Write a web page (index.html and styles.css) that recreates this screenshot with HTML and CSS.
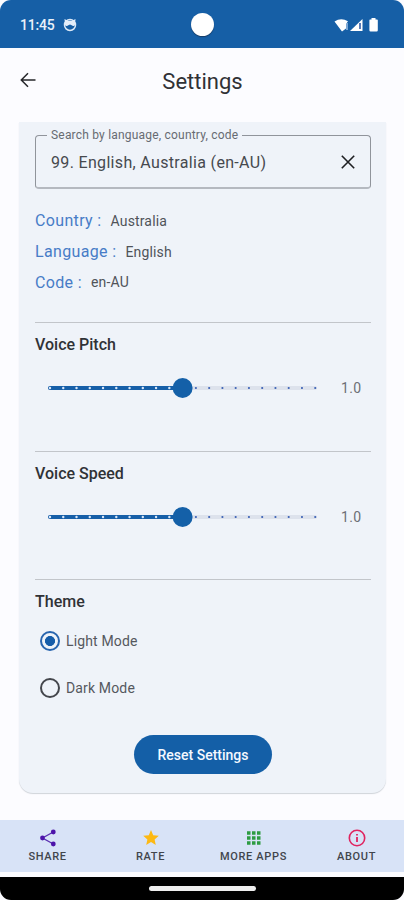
FILE: index.html
```html
<!DOCTYPE html>
<html lang="en">
<head>
<meta charset="utf-8">
<title>Settings</title>
<link rel="stylesheet" href="styles.css">
</head>
<body>
<div class="screen">
  <header class="status">
    <span class="time">11:45</span>
    <svg class="face" width="14" height="14" viewBox="0 0 14 14"><circle cx="7" cy="7" r="5.500" fill="none" stroke="#dce9f7" stroke-width="1.500"/><path d="M1.500 1l3.200 1.800h4.600L12.500 1l-.6 6.300q-1.200 1.300-2.700.2L7 6.600l-2.200.9q-1.500 1.100-2.700-.2z" fill="#e4eefa"/></svg>
    <span class="camera"></span>
    <svg class="signals" width="46" height="16" viewBox="0 0 46 16"><path d="M.5 4.500Q7 0 14 4.200L12 7v4.500L8 14.500z" fill="#fff"/><path d="M13 6v7" stroke="#9fc0e4" stroke-width="1.500"/><path d="M16 14L28.500 2V14z" fill="#fff"/><path d="M26 6v6" stroke="#2450a0" stroke-width="1.500"/><path d="M36 2.500h1.500V1h4v1.500H43q.8 0 .8.800v10q0 1.200-1.200 1.200h-6q-1.200 0-1.200-1.200v-10q0-.8.600-.8z" fill="#fff"/></svg>
  </header>
  <div class="toolbar">
    <svg class="back" width="16" height="16" viewBox="0 0 16 16" fill="none" stroke="#25262a" stroke-width="1.500"><path d="M15.500 8H1.500M8 1.300L1.300 8 8 14.700"/></svg>
    <h1>Settings</h1>
  </div>
  <main class="card">
    <fieldset class="search">
      <legend><span>Search by language, country, code</span></legend>
      <div class="field"><span class="value">99. English, Australia (en-AU)</span>
      <svg width="14" height="14" viewBox="0 0 14 14" stroke="#1e1f22" stroke-width="1.600"><path d="M.8.800l12.400 12.400M13.200.800L.8 13.200"/></svg></div>
    </fieldset>
    <dl class="details">
      <div class="country"><dt>Country :</dt><dd>Australia</dd></div>
      <div class="language"><dt>Language :</dt><dd>English</dd></div>
      <div class="code"><dt>Code :</dt><dd>en-AU</dd></div>
    </dl>
    <section class="voice">
      <h2 class="pitch">Voice Pitch</h2>
      <div class="control">
        <svg width="270" height="22" viewBox="0 0 270 22"><path d="M2 11H267" stroke="#dde2ec" stroke-width="4" stroke-linecap="round"/><path d="M2 11H134" stroke="#165fa8" stroke-width="4" stroke-linecap="round"/><path d="M2 11H134" stroke="#d9e6f8" stroke-width="2.400" stroke-linecap="round" stroke-dasharray="0 13.260"/><path d="M147.900 11H268" stroke="#3c62b5" stroke-width="2.200" stroke-linecap="round" stroke-dasharray="0 13.260"/><circle cx="134.600" cy="11" r="10" fill="#1460a8"/></svg>
        <output>1.0</output>
      </div>
    </section>
    <section class="voice">
      <h2 class="speed">Voice Speed</h2>
      <div class="control">
        <svg width="270" height="22" viewBox="0 0 270 22"><path d="M2 11H267" stroke="#dde2ec" stroke-width="4" stroke-linecap="round"/><path d="M2 11H134" stroke="#165fa8" stroke-width="4" stroke-linecap="round"/><path d="M2 11H134" stroke="#d9e6f8" stroke-width="2.400" stroke-linecap="round" stroke-dasharray="0 13.260"/><path d="M147.900 11H268" stroke="#3c62b5" stroke-width="2.200" stroke-linecap="round" stroke-dasharray="0 13.260"/><circle cx="134.600" cy="11" r="10" fill="#1460a8"/></svg>
        <output>1.0</output>
      </div>
    </section>
    <section class="theme">
      <h2>Theme</h2>
      <div class="option"><span class="radio selected"></span><span class="light">Light Mode</span></div>
      <div class="option"><span class="radio"></span><span class="dark">Dark Mode</span></div>
    </section>
    <button class="reset">Reset Settings</button>
  </main>
  <nav class="nav">
    <div class="item"><svg width="18" height="18" viewBox="0 0 18 18"><path d="M14.300 3L3.500 9l10.800 6" fill="none" stroke="#5a2db0" stroke-width="1.300"/><g fill="#4d14aa"><circle cx="14.300" cy="3" r="2.400"/><circle cx="3.500" cy="9" r="2.400"/><circle cx="14.300" cy="15" r="2.400"/></g></svg><span class="share">SHARE</span></div>
    <div class="item"><svg width="18" height="18" viewBox="0 0 18 18"><path d="M9 1l2.200 5.200 5.600.5-4.200 3.700 1.200 5.600L9 13.100 4.200 16l1.200-5.600L1.200 6.700l5.600-.5z" fill="#fdb913"/></svg><span class="rate">RATE</span></div>
    <div class="item"><svg width="18" height="18" viewBox="0 0 18 18"><path d="M2 2.300h3.500v3.500H2zM7 2.300h3.500v3.500H7zM12 2.300h3.500v3.500H12zM2 7.300h3.500v3.500H2zM7 7.300h3.500v3.500H7zM12 7.300h3.500v3.500H12zM2 12.300h3.500v3.500H2zM7 12.300h3.500v3.500H7zM12 12.300h3.500v3.500H12z" fill="#2d9c42"/></svg><span class="more">MORE APPS</span></div>
    <div class="item"><svg width="18" height="18" viewBox="0 0 18 18" fill="none" stroke="#e02460"><circle cx="9" cy="9" r="7.700" stroke-width="1.600"/><path d="M9 8v5M9 5v1.600" stroke-width="1.800"/></svg><span class="about">ABOUT</span></div>
  </nav>
  <footer class="gesture"><span></span></footer>
</div>
</body>
</html>
```
FILE: styles.css
```css
* { box-sizing: border-box; margin: 0; padding: 0; }
body { background: #fff; font-family: Roboto, "Liberation Sans", sans-serif; color: #202124; }
svg { display: block; flex: none; }
.screen { width: 404px; height: 900px; display: flex; flex-direction: column; background: #fcfcff; overflow: hidden; }
.status { height: 48px; flex: none; display: grid; grid-template-columns: 44px 127px 1fr 70px; align-items: center; padding-left: 19px; background: #165fa6; border-radius: 11px 11px 0 0; }
.time { font-size: 14px; font-weight: 500; letter-spacing: -.2px; color: #e9f1fa; white-space: nowrap; padding: 2px 0 0 1px; }
.face { margin-top: 2px; }
.camera { width: 23px; height: 23px; border-radius: 50%; background: #fff; box-shadow: 0 1px 1px #173c65; margin-left: 1px; }
.signals { margin-top: 1px; }
.toolbar { height: 74px; flex: none; display: grid; grid-template-columns: 70px 1fr 70px; padding: 17px 0 0; }
.back { margin: 7px 0 0 20px; }
h1 { font-size: 22px; line-height: 32px; font-weight: 400; text-align: center; padding: 1px 0 0 1px; letter-spacing: 0; color: #303135; }
.card { width: 367px; height: 671px; flex: none; margin-left: 19px; padding: 5px 15px 0 16px; background: #eff3f9; border-radius: 0 0 14px 14px; box-shadow: 0 1px 1px #d0d4da; display: flex; flex-direction: column; }
.search { height: 62px; flex: none; border: 1px solid #90949b; border-bottom: 2px solid #b5b9c0; border-radius: 4px; padding: 0 15px; min-width: 0; }
legend { margin-left: -4px; padding: 0 4px; line-height: 17px; font-size: 12px; color: #676b72; letter-spacing: .2px; white-space: nowrap; }
.field { display: flex; align-items: center; justify-content: space-between; height: 36px; }
.value { font-size: 16px; letter-spacing: .33px; color: #46494e; }
.details { height: 133px; flex: none; padding-top: 16px; }
.details div { display: flex; align-items: center; height: 31px; }
dt { font-size: 16px; letter-spacing: .35px; color: #477cc7; white-space: nowrap; }
dd { font-size: 14px; letter-spacing: .15px; color: #505359; margin-left: 9px; }
.code dd { padding-bottom: 2px; }
.voice { height: 128.500px; flex: none; border-top: 1px solid #c2c5ca; padding-top: 10px; }
h2 { font-size: 16px; line-height: 24px; font-weight: 500; letter-spacing: 0; color: #303236; }
.control { display: flex; align-items: center; gap: 23px; margin: 20px 0 0 13px; }
output { font-size: 14px; letter-spacing: .3px; color: #6c6f75; }
.theme { height: 156px; flex: none; border-top: 1px solid #c2c5ca; padding-top: 10px; }
.option { display: flex; align-items: center; gap: 6px; padding-left: 5px; height: 47px; font-size: 14px; letter-spacing: .15px; color: #55585e; }
.theme h2 { margin-bottom: 3px; }
.radio { width: 20px; height: 20px; border: 2px solid #44464c; border-radius: 50%; }
.selected { border-color: #2864ae; background: radial-gradient(circle, #155ca9 0 4.700px, transparent 5.300px); }
.reset { width: 138px; height: 39px; flex: none; align-self: center; border: 0; border-radius: 20px; background: #145fa7; color: #f4f8ff; font: 500 14px Roboto, sans-serif; letter-spacing: 0; }
.nav { height: 52px; flex: none; margin-top: 27px; background: #d8e3f7; display: grid; grid-template-columns: repeat(4, 1fr); width: 412px; margin-left: -4px; }
.item { display: flex; flex-direction: column; align-items: center; padding-top: 9px; font-size: 11px; line-height: 14px; font-weight: 500; letter-spacing: .65px; color: #41454c; white-space: nowrap; }
.item span { margin-top: 3px; }
.gesture { height: 23px; flex: none; margin-top: 5px; background: #000; border-radius: 0 0 11px 11px; display: flex; justify-content: center; padding-top: 9px; }
.gesture span { width: 107px; height: 5px; border-radius: 3px; background: #eee; }
```
